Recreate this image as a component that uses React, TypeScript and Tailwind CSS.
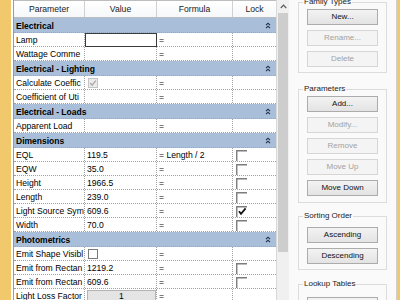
import React from "react";

type DataRow = {
  kind: "data";
  name: string;
  value?: React.ReactNode;
  valueCell?: "edit" | "button";
  formula: string;
  lock?: "off" | "on";
};
type GroupRow = { kind: "group"; label: string };
type Row = DataRow | GroupRow;

function Chevrons() {
  return (
    <svg width="6" height="7" viewBox="0 0 6 7">
      <path d="M1 3.2 L3 1.2 L5 3.2 M1 6.2 L3 4.2 L5 6.2" fill="none" stroke="#1c2b45" strokeWidth="1.1" />
    </svg>
  );
}

function LockBox({ checked }: { checked?: boolean }) {
  return (
    <svg width="11" height="11" viewBox="0 0 11 11" className="ml-[3px] mt-[1px]">
      <path d="M0.75 11 V0.75 H11" fill="none" stroke="#7c7c7c" strokeWidth="1.4" />
      {checked && <path d="M3 5.2 L5 7.8 L9.6 2.4" fill="none" stroke="#111" strokeWidth="1.7" />}
    </svg>
  );
}

function DisabledCheck() {
  return (
    <div className="ml-[1px] w-[10px] h-[10px] border border-[#c4c4c4] bg-[#ececec] flex items-center justify-center">
      <svg width="8" height="8" viewBox="0 0 8 8">
        <path d="M1.2 4 L3.2 6.2 L6.8 1.6" fill="none" stroke="#a8a8a8" strokeWidth="1.3" />
      </svg>
    </div>
  );
}

function EmptyCheck() {
  return <div className="ml-[1px] w-[10px] h-[10px] border border-[#7a7a7a] bg-white" />;
}

const rows: Row[] = [
  { kind: "group", label: "Electrical" },
  { kind: "data", name: "Lamp", valueCell: "edit", formula: "=" },
  { kind: "data", name: "Wattage Comme", formula: "=" },
  { kind: "group", label: "Electrical - Lighting" },
  { kind: "data", name: "Calculate Coeffic", value: <DisabledCheck />, formula: "=" },
  { kind: "data", name: "Coefficient of Uti", formula: "=" },
  { kind: "group", label: "Electrical - Loads" },
  { kind: "data", name: "Apparent Load", formula: "=" },
  { kind: "group", label: "Dimensions" },
  { kind: "data", name: "EQL", value: "119.5", formula: "= Length / 2", lock: "off" },
  { kind: "data", name: "EQW", value: "35.0", formula: "=", lock: "off" },
  { kind: "data", name: "Height", value: "1966.5", formula: "=", lock: "off" },
  { kind: "data", name: "Length", value: "239.0", formula: "=", lock: "off" },
  { kind: "data", name: "Light Source Sym", value: "609.6", formula: "=", lock: "on" },
  { kind: "data", name: "Width", value: "70.0", formula: "=", lock: "off" },
  { kind: "group", label: "Photometrics" },
  { kind: "data", name: "Emit Shape Visibl", value: <EmptyCheck />, formula: "=" },
  { kind: "data", name: "Emit from Rectan", value: "1219.2", formula: "=", lock: "off" },
  { kind: "data", name: "Emit from Rectan", value: "609.6", formula: "=", lock: "off" },
  { kind: "data", name: "Light Loss Factor", valueCell: "button", formula: "=" },
];

function TableRow({ row }: { row: Row }) {
  if (row.kind === "group") {
    return (
      <div className="flex items-center h-[15px] shrink-0 bg-[#a9bfd9] border-b border-dotted border-[#9aa8b8]">
        <span className="flex-1 pl-[2px] pt-[1px] font-bold text-[8.5px] leading-[14px] whitespace-nowrap">{row.label}</span>
        <span className="mr-[5px] flex items-center">
          <Chevrons />
        </span>
      </div>
    );
  }
  let valueNode: React.ReactNode;
  if (row.valueCell === "edit") {
    valueNode = <div className="w-[72px] h-[14px] border border-[#3a3a3a] bg-white shrink-0" />;
  } else if (row.valueCell === "button") {
    valueNode = (
      <div className="w-[72px] h-[14px] border-r border-dotted border-[#a0a0a0] pl-[2px] pt-[1px] shrink-0">
        <div className="h-[13px] bg-[#e4e4e4] border border-[#b4b4b4] flex items-center justify-center leading-[11px]">
          1
        </div>
      </div>
    );
  } else {
    valueNode = (
      <div className="w-[72px] h-full border-r border-dotted border-[#a0a0a0] pl-[2px] pt-[1px] flex items-center overflow-hidden whitespace-nowrap shrink-0">
        {row.value}
      </div>
    );
  }
  return (
    <div className="flex h-[14px] shrink-0 border-b border-dotted border-[#a0a0a0] leading-[13px]">
      <div className="w-[71px] border-r border-dotted border-[#a0a0a0] pl-[2px] pt-[1px] overflow-hidden whitespace-nowrap shrink-0 flex items-center">
        {row.name}
      </div>
      {valueNode}
      <div className="w-[76px] border-r border-dotted border-[#a0a0a0] pl-[2px] pt-[1px] overflow-hidden whitespace-nowrap shrink-0 flex items-center">
        {row.formula}
      </div>
      <div className="w-[43px] shrink-0 flex items-center">{row.lock && <LockBox checked={row.lock === "on"} />}</div>
    </div>
  );
}

function Btn({ label, disabled }: { label: string; disabled?: boolean }) {
  return (
    <div
      className={
        disabled
          ? "h-[16px] border border-[#d6d6d6] bg-[#f4f4f4] text-[#a2a2a2] flex items-center justify-center leading-[14px]"
          : "h-[16px] border border-[#acacac] bg-linear-to-b from-[#f3f3f3] to-[#e3e3e3] text-[#111] flex items-center justify-center leading-[14px]"
      }
    >
      {label}
    </div>
  );
}

function Group({
  title,
  className,
  children,
}: {
  title: string;
  className: string;
  children: React.ReactNode;
}) {
  return (
    <fieldset className={"border border-[#dcdcdc] px-[8px] flex flex-col gap-[5px] " + className}>
      <legend className="ml-[-4px] px-[1px] leading-[10px] text-[#1a1a1a]">{title}</legend>
      {children}
    </fieldset>
  );
}

export default function App() {
  return (
    <div className="w-[400px] h-[300px] overflow-hidden flex bg-white font-['Liberation_Sans',Arial,sans-serif] text-[8.6px] text-black">
      <div className="w-[11px] shrink-0 bg-[#f1c96c]" />
      <div className="w-[2px] shrink-0 bg-white" />
      <div className="w-[263px] shrink-0 flex flex-col border-l border-[#9a9a9a]">
        <div className="flex h-[18px] shrink-0 border-t border-b border-[#bdbdbd] bg-linear-to-b from-white to-[#f6f7f9] text-[#1a1a1a]">
          <div className="w-[71px] border-r border-[#d0d0d0] flex items-center justify-center shrink-0">Parameter</div>
          <div className="w-[72px] border-r border-[#d0d0d0] flex items-center justify-center shrink-0">Value</div>
          <div className="w-[76px] border-r border-[#d0d0d0] flex items-center justify-center shrink-0">Formula</div>
          <div className="w-[43px] flex items-center justify-center shrink-0">Lock</div>
        </div>
        {rows.map((r, i) => (
          <TableRow key={i} row={r} />
        ))}
      </div>
      <div className="w-[13px] shrink-0 bg-[#f0f0f0] border-l border-[#d8d8d8] flex flex-col">
        <div className="h-[13px] flex items-center justify-center">
          <svg width="7" height="5" viewBox="0 0 7 5">
            <path d="M0.8 4 L3.5 1.2 L6.2 4" fill="none" stroke="#5a5a5a" strokeWidth="1.2" />
          </svg>
        </div>
        <div className="h-[239px] ml-[1px] w-[10px] bg-[#cdcdcd]" />
      </div>
      <div className="w-[107px] shrink-0 bg-[#fafafa] pl-[9px] pr-[9px] mt-[-3px] flex flex-col text-[8px]">
        <Group title="Family Types" className="pt-[2px] pb-[5px]">
          <Btn label="New..." />
          <Btn label="Rename..." disabled />
          <Btn label="Delete" disabled />
        </Group>
        <Group title="Parameters" className="mt-[11px] pt-[2px] pb-[6px]">
          <Btn label="Add..." />
          <Btn label="Modify..." disabled />
          <Btn label="Remove" disabled />
          <Btn label="Move Up" disabled />
          <Btn label="Move Down" />
        </Group>
        <Group title="Sorting Order" className="mt-[8px] pt-[6px] pb-[5px]">
          <Btn label="Ascending" />
          <Btn label="Descending" />
        </Group>
        <Group title="Lookup Tables" className="mt-[9px] pt-[8px] pb-[5px]">
          <Btn label="Manage..." />
        </Group>
      </div>
      <div className="w-[4px] shrink-0 bg-[#f1c96c] border-l border-[#cfcfcf]" />
    </div>
  );
}
